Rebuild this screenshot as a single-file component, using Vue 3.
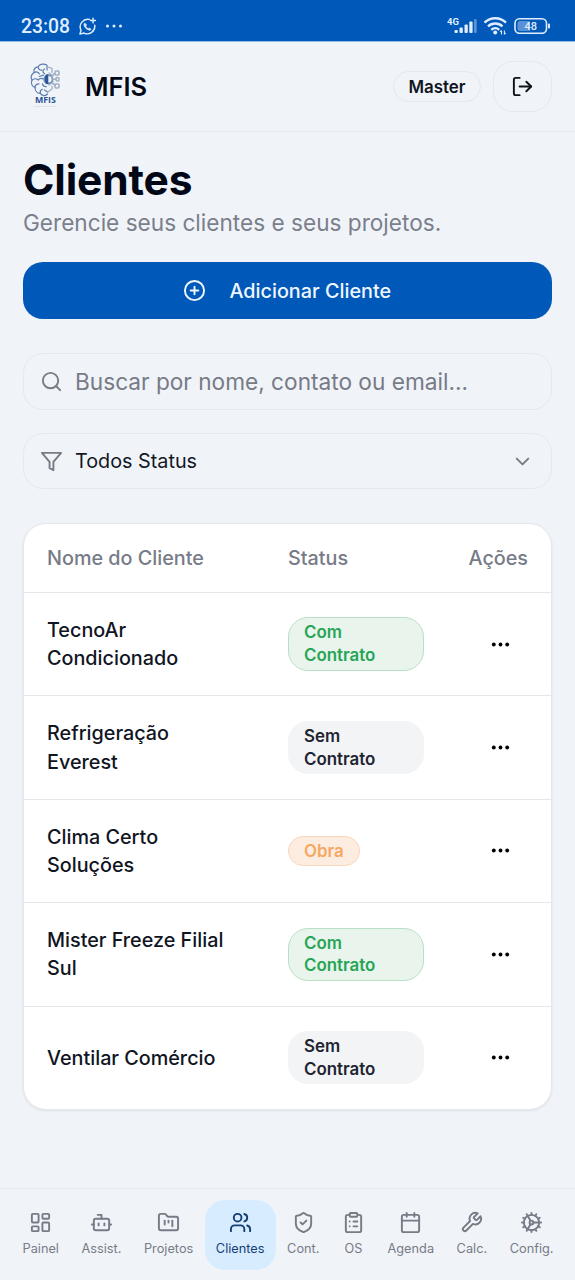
<script setup>
const clients = [
  { name: 'TecnoAr Condicionado', status: 'Com Contrato', kind: 'green' },
  { name: 'Refrigeração Everest', status: 'Sem Contrato', kind: 'gray' },
  { name: 'Clima Certo Soluções', status: 'Obra', kind: 'orange' },
  { name: 'Mister Freeze Filial Sul', status: 'Com Contrato', kind: 'green' },
  { name: 'Ventilar Comércio', status: 'Sem Contrato', kind: 'gray' },
]

const nav = [
  { label: 'Painel', paths: ['M4 3h5a1 1 0 0 1 1 1v7a1 1 0 0 1-1 1H4a1 1 0 0 1-1-1V4a1 1 0 0 1 1-1z', 'M15 3h5a1 1 0 0 1 1 1v3a1 1 0 0 1-1 1h-5a1 1 0 0 1-1-1V4a1 1 0 0 1 1-1z', 'M15 12h5a1 1 0 0 1 1 1v7a1 1 0 0 1-1 1h-5a1 1 0 0 1-1-1v-7a1 1 0 0 1 1-1z', 'M4 16h5a1 1 0 0 1 1 1v3a1 1 0 0 1-1 1H4a1 1 0 0 1-1-1v-3a1 1 0 0 1 1-1z'] },
  { label: 'Assist.', paths: ['M12 8V4H8', 'M6 8h12a2 2 0 0 1 2 2v8a2 2 0 0 1-2 2H6a2 2 0 0 1-2-2v-8a2 2 0 0 1 2-2z', 'M2 14h2', 'M20 14h2', 'M15 13v2', 'M9 13v2'] },
  { label: 'Projetos', paths: ['M4 20h16a2 2 0 0 0 2-2V8a2 2 0 0 0-2-2h-7.93a2 2 0 0 1-1.66-.9l-.82-1.2A2 2 0 0 0 7.93 3H4a2 2 0 0 0-2 2v13c0 1.1.9 2 2 2Z', 'M8 10v4', 'M12 10v2', 'M16 10v6'] },
  { label: 'Clientes', active: true, paths: ['M16 21v-2a4 4 0 0 0-4-4H6a4 4 0 0 0-4 4v2', 'M5 7a4 4 0 1 0 8 0a4 4 0 1 0-8 0', 'M22 21v-2a4 4 0 0 0-3-3.87', 'M16 3.13a4 4 0 0 1 0 7.75'] },
  { label: 'Cont.', paths: ['M20 13c0 5-3.5 7.5-7.66 8.95a1 1 0 0 1-.67-.01C7.5 20.5 4 18 4 13V6a1 1 0 0 1 1-1c2 0 4.5-1.2 6.24-2.72a1.17 1.17 0 0 1 1.52 0C14.51 3.81 17 5 19 5a1 1 0 0 1 1 1z', 'm9 12 2 2 4-4'] },
  { label: 'OS', paths: ['M9 2h6a1 1 0 0 1 1 1v2a1 1 0 0 1-1 1H9a1 1 0 0 1-1-1V3a1 1 0 0 1 1-1z', 'M16 4h2a2 2 0 0 1 2 2v14a2 2 0 0 1-2 2H6a2 2 0 0 1-2-2V6a2 2 0 0 1 2-2h2', 'M12 11h4', 'M12 16h4', 'M8 11h.01', 'M8 16h.01'] },
  { label: 'Agenda', paths: ['M8 2v4', 'M16 2v4', 'M5 4h14a2 2 0 0 1 2 2v14a2 2 0 0 1-2 2H5a2 2 0 0 1-2-2V6a2 2 0 0 1 2-2z', 'M3 10h18'] },
  { label: 'Calc.', paths: ['M14.7 6.3a1 1 0 0 0 0 1.4l1.6 1.6a1 1 0 0 0 1.4 0l3.77-3.77a6 6 0 0 1-7.94 7.94l-6.91 6.91a2.12 2.12 0 0 1-3-3l6.91-6.91a6 6 0 0 1 7.94-7.94l-3.76 3.76z'] },
  { label: 'Config.', paths: ['M12 20a8 8 0 1 0 0-16 8 8 0 0 0 0 16Z', 'M12 14a2 2 0 1 0 0-4 2 2 0 0 0 0 4Z', 'M12 2v2', 'M12 22v-2', 'm17 20.66-1-1.73', 'M11 10.27 7 3.34', 'm20.66 17-1.73-1', 'm3.34 7 1.73 1', 'M14 12h8', 'M2 12h2', 'm20.66 7-1.73 1', 'm3.34 17 1.73-1', 'm17 3.34-1 1.73', 'm11 13.73-4 6.93'] },
]
</script>

<template>
  <div class="screen">
    <div class="statusbar">
      <span class="clock">23:08</span>
      <svg class="chat" width="19" height="19" viewBox="0 0 20 20" fill="none" stroke="currentColor" stroke-width="1.5" stroke-linecap="round" stroke-linejoin="round">
        <path d="M12.3 2.6A8 8 0 0 0 3.2 14L2 18l4.2-1.1A8 8 0 0 0 17.6 8.6" />
        <path d="M15.8 1.2v5M13.3 3.7h5" />
        <path d="M7 6.4c-.8.6-1 1.6-.5 2.8.9 2.2 2.5 3.8 4.7 4.6 1.2.4 2.1.1 2.7-.8l-2-1.5-1.2.8c-1.2-.6-2-1.4-2.5-2.500l.8-1.200z" fill="currentColor" stroke-width=".6" />
      </svg>
      <svg class="dots" width="18" height="4" viewBox="0 0 18 4" fill="currentColor"><circle cx="2.5" cy="2" r="1.5" /><circle cx="9" cy="2" r="1.5" /><circle cx="15.5" cy="2" r="1.5" /></svg>
      <div class="spacer"></div>
      <svg width="32" height="20" viewBox="0 0 32 20" fill="currentColor">
        <text x="0" y="8.8" class="net">4G</text>
        <rect x="7.500" y="14" width="3.300" height="3" rx="1" />
        <rect x="12.500" y="11.5" width="3.300" height="5.500" rx="1" />
        <rect x="17.500" y="8.500" width="3.300" height="8.500" rx="1" />
        <rect x="22.300" y="5.500" width="3.300" height="11.500" rx="1" />
        <rect x="27" y="3" width="2.700" height="14" rx="1" opacity=".4" />
      </svg>
      <svg class="wifi" width="26" height="20" viewBox="0 0 26 20" fill="none" stroke="currentColor" stroke-width="2.400">
        <path d="M1.500 6.600a15.500 15.500 0 0 1 21.500 0M5 10.400a10.400 10.400 0 0 1 14.500 0M8.300 13.900a5.700 5.700 0 0 1 7.900 0" />
        <circle cx="12.200" cy="16.400" r="2" fill="currentColor" stroke="none" />
        <path d="M18.500 18.500v-3.800M21.400 14.500v3.800M17.200 15.800l1.300-1.400M22.700 17l-1.300 1.400" stroke-width="1.100" />
      </svg>
      <svg class="battery" width="38" height="18" viewBox="0 0 38 18">
        <rect x="1" y="1.700" width="31.500" height="14.600" rx="4.500" fill="none" stroke="currentColor" stroke-width="1.600" />
        <path d="M6 4h10v10H6a2.500 2.500 0 0 1-2.500-2.500v-5A2.500 2.500 0 0 1 6 4z" fill="currentColor" opacity=".4" />
        <rect x="34" y="6.500" width="2" height="5" rx="1" fill="currentColor" />
        <text x="16.700" y="13" text-anchor="middle" class="charge">48</text>
      </svg>
    </div>

    <header class="header">
      <svg class="logo" width="36" height="46" viewBox="0 0 36 46" fill="none" stroke="#5a7db0" stroke-width="1.200" stroke-linecap="round">
        <path d="M20 2.300c-3-2.100-7.500-1.300-8.800 1.500-3.300.2-5 2.800-4.100 5.600-2.700 1.900-3.600 5-2.100 7.800-1.600 3 .1 6.400 3 7.200 0 3.400 2.300 5.800 5.200 6 1.800 2.600 5.300 3 7.300.6" />
        <path d="M11.200 4c.2 2.200 1.600 3.300 3.600 3.100M7.100 9.500c2-1.100 4.400-.5 5.300 1.400M5 17.200c1.600-1.700 4.300-1.900 6.200-.2 1.300-1.600 3.200-1.900 5-1.100M8 24.400c.2-2.100 1.900-3.400 4-3.500M13.300 30.400c-.4-1.800.2-3.300 1.900-4.200M17.500 6c-2 1-2.100 3.200.1 4.700M15.500 20.900c.5 2.100 1.900 2.900 3.800 2.700M12.400 13.500l4-1.400M17.500 27l3 2M20 3v4" />
        <path d="M21 4l4 1.500v4M21 29l4-3v-3M22 10l4 3M22 22l4-3.500" stroke="#9aaac2" />
        <circle cx="21.300" cy="16.300" r="4.200" stroke="#7893b8" stroke-width="1.800" />
        <path d="M21.300 11.500v9.500h-2.300c-1.500-3-1.500-6.500 0-9.500z" fill="#2d5695" stroke="none" />
        <g stroke="#a3b0c3" stroke-width="1.600"><path d="M25 12.500l3-2M26 16.300h3M25 20l3 2" /><rect x="28" y="8" width="4" height="4" rx="1" /><rect x="29" y="14.500" width="3" height="3.500" rx="1" /><rect x="28" y="21" width="4" height="4" rx="1" /></g>
        <text x="8" y="40.400" class="logo-text">MFIS</text>
        <path d="M7 43.500h22" stroke="#dfe4eb" />
      </svg>
      <span class="brand">MFIS</span>
      <div class="spacer"></div>
      <span class="role">Master</span>
      <button class="logout">
        <svg width="23" height="23" viewBox="0 0 24 24" class="icon"><path d="M9 21H5a2 2 0 0 1-2-2V5a2 2 0 0 1 2-2h4" /><path d="m16 17 5-5-5-5" /><path d="M21 12H9" /></svg>
      </button>
    </header>

    <main class="main">
      <h1>Clientes</h1>
      <p class="subtitle">Gerencie seus clientes e seus projetos.</p>
      <button class="add">
        <svg width="23" height="23" viewBox="0 0 24 24" class="icon"><circle cx="12" cy="12" r="10" /><path d="M8 12h8M12 8v8" /></svg>
        <span>Adicionar Cliente</span>
      </button>
      <div class="field search">
        <svg width="23" height="23" viewBox="0 0 24 24" class="icon"><circle cx="11" cy="11" r="8" /><path d="m21 21-4.300-4.300" /></svg>
        <span>Buscar por nome, contato ou email...</span>
      </div>
      <div class="field select">
        <svg width="23" height="23" viewBox="0 0 24 24" class="icon"><path d="M22 3H2l8 9.460V19l4 2v-8.540L22 3z" /></svg>
        <span>Todos Status</span>
        <div class="spacer"></div>
        <svg width="23" height="23" viewBox="0 0 24 24" class="icon"><path d="m6 9 6 6 6-6" /></svg>
      </div>
      <section class="card">
        <div class="row head"><span>Nome do Cliente</span><span>Status</span><span class="right">Ações</span></div>
        <div v-for="c in clients" :key="c.name" class="row">
          <span class="name">{{ c.name }}</span>
          <div class="status"><span class="badge" :class="c.kind">{{ c.status }}</span></div>
          <svg class="more" width="23" height="23" viewBox="0 0 24 24"><circle cx="5" cy="12" r="2" /><circle cx="12" cy="12" r="2" /><circle cx="19" cy="12" r="2" /></svg>
        </div>
      </section>
    </main>

    <nav class="nav">
      <div v-for="n in nav" :key="n.label" class="tab" :class="{ active: n.active }">
        <svg width="23" height="23" viewBox="0 0 24 24" class="icon"><path v-for="p in n.paths" :key="p" :d="p" /></svg>
        <span>{{ n.label }}</span>
      </div>
    </nav>
  </div>
</template>

<style>
body { margin: 0; background: #f0f4f9; }
</style>

<style scoped>
* { box-sizing: border-box; }
.screen { width: 575px; height: 1280px; display: flex; flex-direction: column; background: #f0f4f9; color: #020817; font-family: Inter, sans-serif; overflow: hidden; }
.spacer { flex: 1; }
.icon { display: block; flex: none; fill: none; stroke: currentColor; stroke-width: 2; stroke-linecap: round; stroke-linejoin: round; }
button { font: inherit; padding: 0; margin: 0; }

.statusbar { height: 42px; flex: none; display: flex; align-items: center; padding: 11px 23px 0 21px; background: #0058b9; color: #dfeeff; border-bottom: 1px solid #8fb8e3; }
.clock { font: 500 19.300px/24px Roboto, sans-serif; width: 49px; padding-top: 1px; white-space: nowrap; }
.chat { margin-left: 8px; }
.dots { margin-left: 8px; }
.net { font: 700 9.500px Roboto, sans-serif; }
.wifi { margin-left: 4px; }
.battery { margin-left: 5px; }
.charge { font: 500 11px Roboto, sans-serif; fill: #dfeeff; }

.header { height: 90px; flex: none; display: flex; align-items: center; padding: 0 23px 1px 27px; border-bottom: 1px solid #e5e9ee; }
.logo-text { font: 700 8.800px "Open Sans", sans-serif; fill: #2c5596; stroke: none; }
.brand { margin-left: 22px; font-size: 25.500px; font-weight: 600; }
.role { height: 31px; padding: 0 14.500px; border: 1px solid #e5e7eb; border-radius: 16px; font-size: 16.900px; line-height: 30px; font-weight: 600; color: #111522; }
.logout { width: 59px; height: 51px; margin-left: 12px; display: flex; align-items: center; justify-content: center; border: 1px solid #e5e8ed; border-radius: 20px; background: transparent; color: #10131b; }

.main { flex: 1; min-height: 0; padding: 22px 23px 0; display: flex; flex-direction: column; }
h1 { margin: 0; font-size: 42.500px; line-height: 51px; font-weight: 700; letter-spacing: -.15px; }
.subtitle { margin: 0; font-size: 22.620px; line-height: 34px; padding-top: 1px; color: #7b7f8b; }
.add { height: 57px; flex: none; margin: 22px 0 0 -.5px; border: 0; border-radius: 20px; display: flex; align-items: center; justify-content: center; gap: 23px; background: #0058b9; color: #f0f7ff; font-size: 19.800px; font-weight: 500; }
.field { height: 57px; flex: none; display: flex; align-items: center; padding: 0 17px 0 16px; gap: 12px; border: 1px solid #e5e8ed; border-radius: 20px; color: #777b86; }
.search { margin-top: 34px; font-size: 22.650px; }
.select { height: 56px; margin-top: 23px; font-size: 19.800px; }
.select span { color: #14171f; }

.card { flex: none; margin-top: 34px; height: 587px; border: 1px solid #e4e7eb; border-radius: 23px; background: #fff; box-shadow: 0 1px 3px rgba(0, 0, 0, .08); }
.row { height: 103.400px; display: grid; grid-template-columns: 241px 136px 1fr; align-items: center; padding: 0 23px; font-size: 19.780px; line-height: 28.400px; font-weight: 500; }
.row + .row { border-top: 1px solid #e4e7eb; }
.head { height: 68px; color: #777b87; }
.right { text-align: right; }
.name { padding-right: 45px; color: #11151f; }
.badge { display: inline-block; border: 1px solid; border-radius: 20px; padding: 3px 15px; font-size: 16.900px; line-height: 22.700px; font-weight: 600; }
.status { display: flex; }
.green { background: #e8f4ec; border-color: #b9dfc6; color: #27a556; }
.gray { background: #f3f4f6; border-color: #f3f4f6; color: #1f2433; }
.orange { background: #fdece0; border-color: #fad5b9; color: #f4a862; }
.more { justify-self: end; margin-right: 16.500px; }

.nav { height: 92px; flex: none; display: flex; align-items: flex-start; justify-content: space-between; padding: 11px 10.500px 0 11.500px; border-top: 1px solid #e5e8ed; }
.tab { height: 70px; padding: 11px 11px 0; display: flex; flex-direction: column; align-items: center; gap: 6px; border-radius: 20px; color: #777b86; font-size: 12.750px; line-height: 18px; white-space: nowrap; }
.active { background: #d7edff; color: #153e75; }
</style>
